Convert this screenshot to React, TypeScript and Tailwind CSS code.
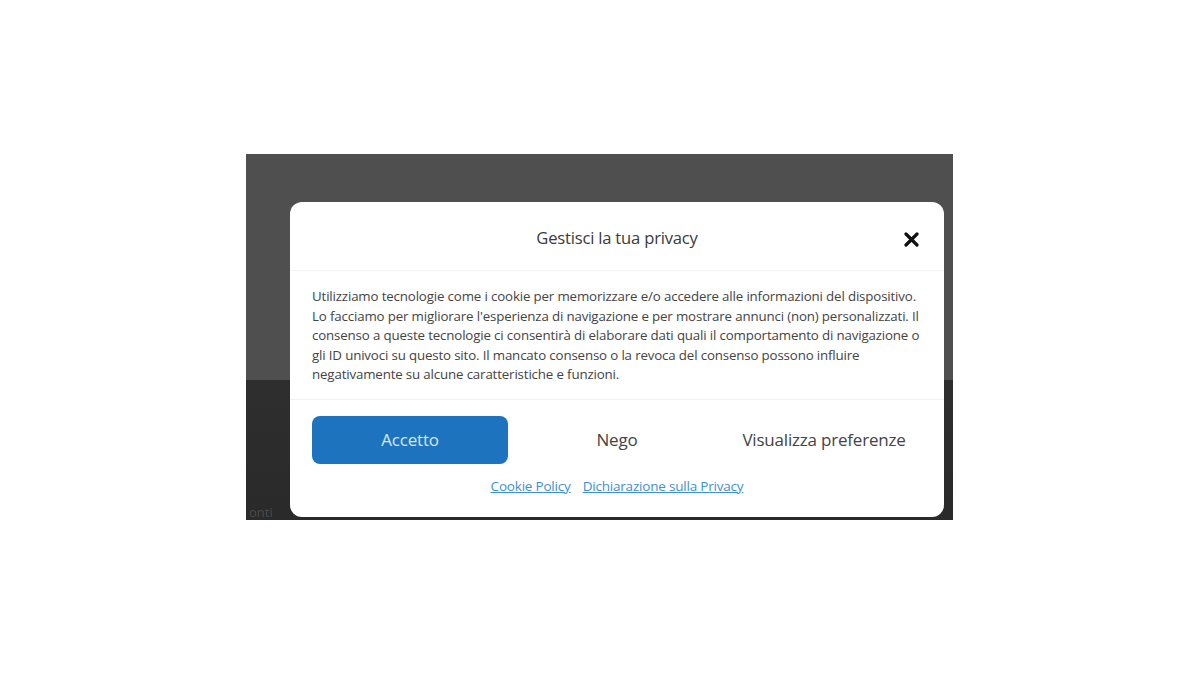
import React from "react";

export default function App() {
  return (
    <div className="w-[1199px] h-[674px] bg-white pt-[154px] pl-[246px]" style={{ fontFamily: "'Open Sans', Lato, sans-serif" }}>
      <div className="relative w-[707px] h-[366px] bg-[linear-gradient(to_bottom,#4f4f4f_0,#4f4f4f_226px,#2e2e2e_226px,#2a2a2a_100%)] pt-[48px] pl-[44px] overflow-hidden">
        <span className="absolute left-[3px] bottom-[1px] text-[13px] text-[#4a4a4a] leading-none">onti</span>
        <div className="relative w-[654px] h-[315px] bg-white rounded-[12px] flex flex-col">
          <div className="h-[69px] flex items-center justify-center relative border-b border-[#f2f2f2]">
            <h2 className="text-[16.6px] text-[#3a3a3a] mt-[4px] tracking-[-0.2px]">Gestisci la tua privacy</h2>
            <svg className="absolute left-[614px] top-[30px]" width="15" height="15" viewBox="0 0 15 15">
              <path d="M2 2 L13 13 M13 2 L2 13" stroke="#111" strokeWidth="3.2" strokeLinecap="round" />
            </svg>
          </div>
          <div className="px-[22px] pt-[16px] pb-[14px] border-b border-[#f2f2f2]">
            <p className="text-[13.3px] leading-[19.5px] text-[#444] tracking-[-0.15px] whitespace-nowrap">
              Utilizziamo tecnologie come i cookie per memorizzare e/o accedere alle informazioni del dispositivo.<br />
              Lo facciamo per migliorare l'esperienza di navigazione e per mostrare annunci (non) personalizzati. Il<br />
              consenso a queste tecnologie ci consentirà di elaborare dati quali il comportamento di navigazione o<br />
              gli ID univoci su questo sito. Il mancato consenso o la revoca del consenso possono influire<br />
              negativamente su alcune caratteristiche e funzioni.
            </p>
          </div>
          <div className="px-[22px] pt-[16px]">
            <div className="grid grid-cols-3 gap-[11px]">
              <button className="h-[48px] rounded-[8px] bg-[#1e73be] text-[#d7e8f7] text-[17px] tracking-[-0.2px]">Accetto</button>
              <button className="h-[48px] text-[#444] text-[17px] tracking-[-0.2px]">Nego</button>
              <button className="h-[48px] text-[#444] text-[17px] tracking-[-0.2px]">Visualizza preferenze</button>
            </div>
            <div className="flex justify-center gap-[12px] mt-[16px] text-[13.5px] text-[#3f8fd6] leading-none tracking-[-0.2px]">
              <span className="underline">Cookie Policy</span>
              <span className="underline">Dichiarazione sulla Privacy</span>
            </div>
          </div>
        </div>
      </div>
    </div>
  );
}
